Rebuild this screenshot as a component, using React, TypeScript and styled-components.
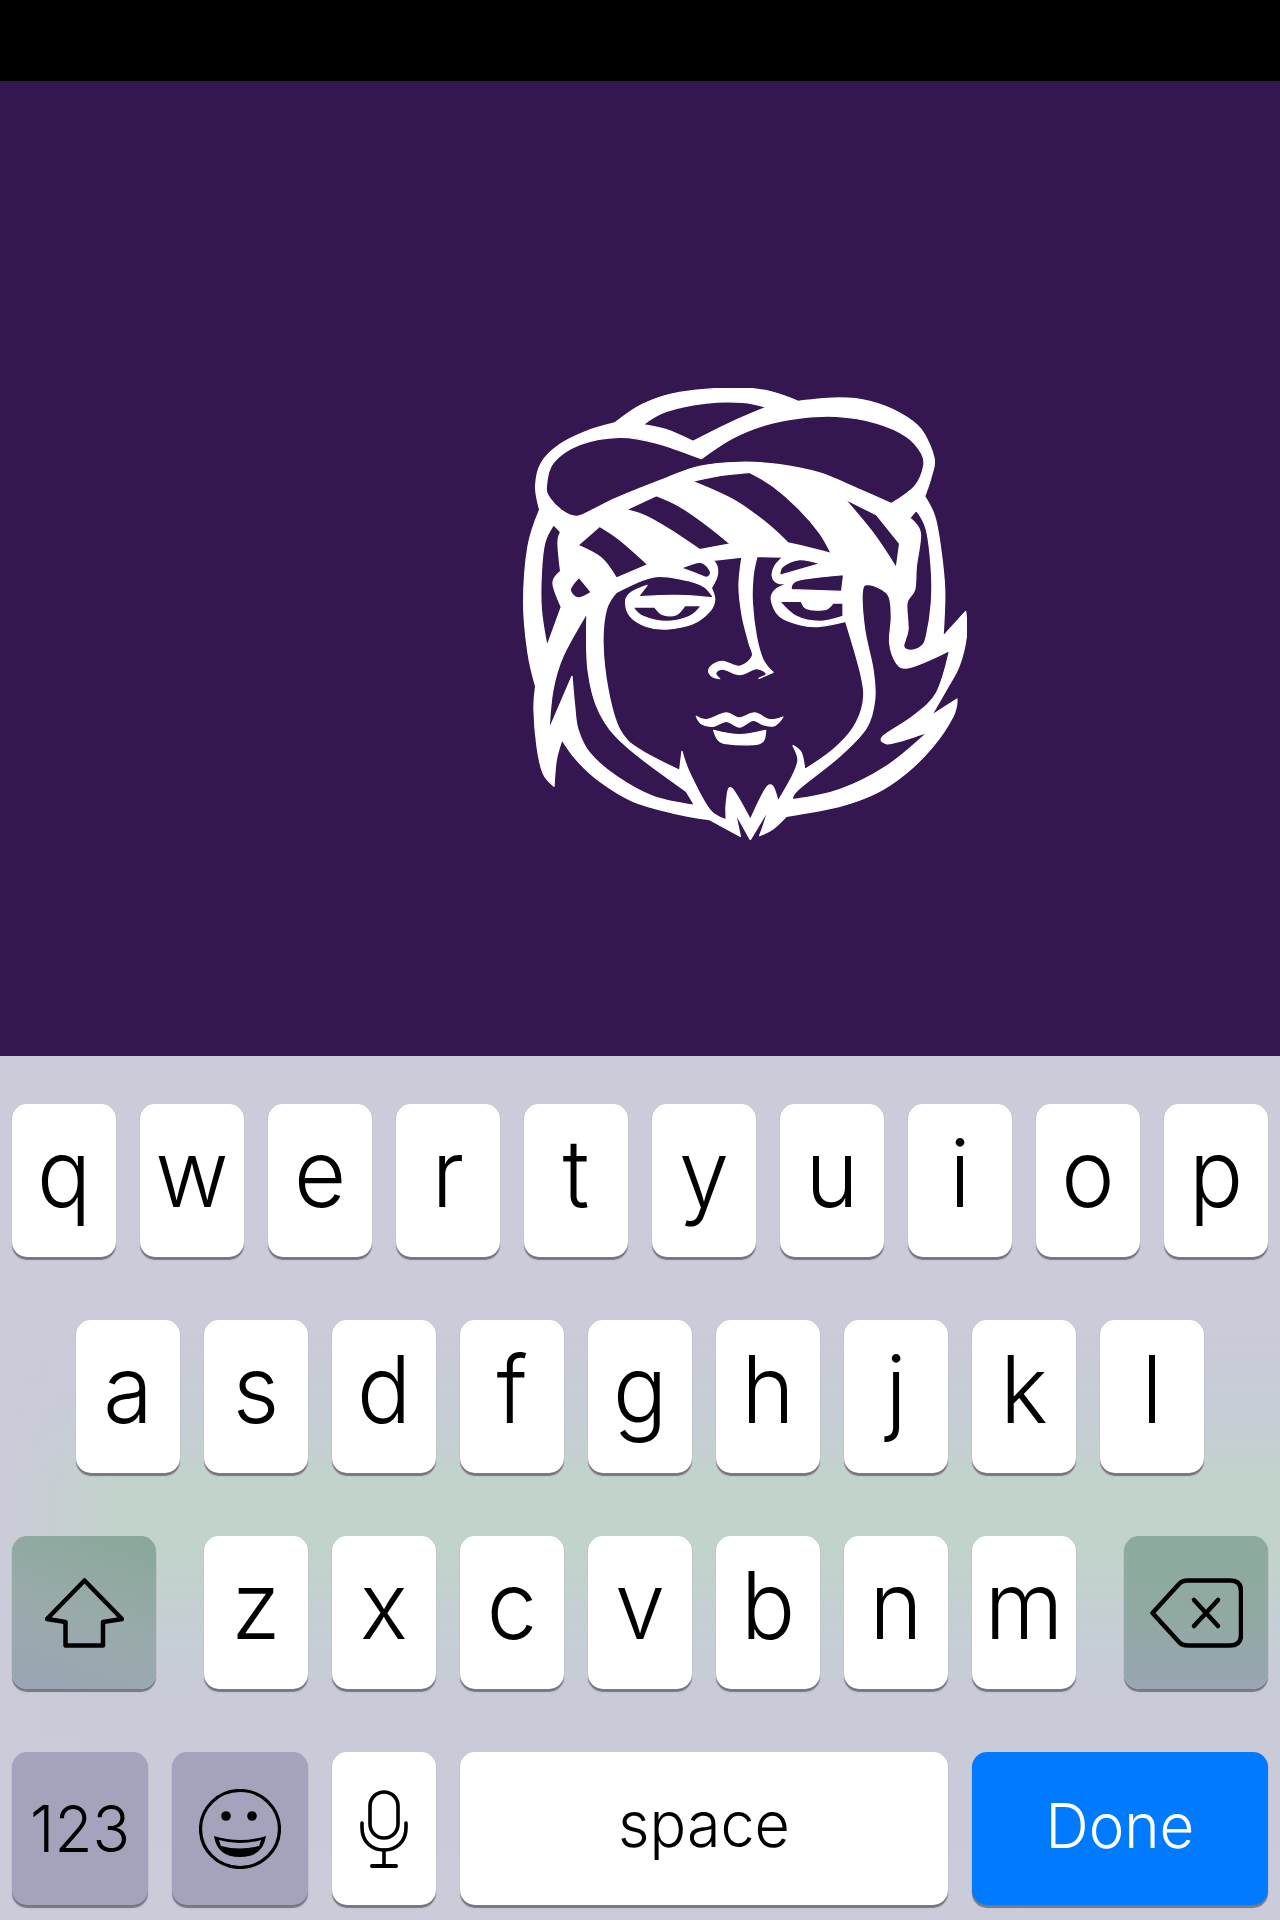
import React from "react";
import styled, { createGlobalStyle, css } from "styled-components";

const Global = createGlobalStyle`
  html, body { margin: 0; padding: 0; background: #000; }
  body { font-family: Inter, "Liberation Sans", sans-serif; }
`;

const Page = styled.div`
  width: 1280px;
  height: 1920px;
  display: flex;
  flex-direction: column;
  background: #000;
  overflow: hidden;
`;

const StatusBar = styled.div`
  height: 81px;
  flex: none;
  background: #000;
`;

const Hero = styled.div`
  height: 975px;
  flex: none;
  box-sizing: border-box;
  padding: 307px 0 0 523px;
  background: #341650;
`;

const Keyboard = styled.div`
  height: 864px;
  flex: none;
  box-sizing: border-box;
  padding: 48px 12px 0;
  display: flex;
  flex-direction: column;
  gap: 63px;
  background:
    linear-gradient(90deg, #cbcbd9 0, rgba(203, 203, 217, 0) 130px),
    linear-gradient(
      180deg,
      #cbcbd9 0,
      #cbcbd9 270px,
      #c6cdd6 360px,
      #c1d3ca 430px,
      #c1d3ca 490px,
      #c5ced5 580px,
      #c9cbd8 640px,
      #cbcbd9 100%
    );
`;

const Row = styled.div<{ $inset?: number }>`
  display: flex;
  justify-content: space-between;
  padding: 0 ${(p) => p.$inset ?? 0}px;
`;

const LetterGroup = styled.div`
  display: flex;
  gap: 24px;
`;

type Tone = "light" | "shift" | "delete" | "mod" | "done";

const toneStyles: Record<Tone, ReturnType<typeof css>> = {
  light: css`
    background: #fff;
    color: #000;
  `,
  shift: css`
    background: linear-gradient(200deg, #88a899 0%, #9aaaab 55%, #9aa5b6 100%);
    color: #000;
  `,
  delete: css`
    background: linear-gradient(180deg, #8cab9c 0%, #90a9a1 50%, #9aa5b4 100%);
    color: #000;
  `,
  mod: css`
    background: #a3a3bc;
    color: #000;
  `,
  done: css`
    background: #007aff;
    color: #fff;
  `,
};

const Key = styled.div<{ $w: number; $tone?: Tone }>`
  width: ${(p) => p.$w}px;
  height: 153px;
  flex: none;
  border-radius: 15px;
  display: flex;
  align-items: center;
  justify-content: center;
  box-shadow: 0 2.5px 1px rgba(70, 70, 80, 0.62);
  ${(p) => toneStyles[p.$tone ?? "light"]}
`;

const Glyph = styled.span<{ $size: number; $lift: number }>`
  display: block;
  font-family: Inter, "Liberation Sans", sans-serif;
  font-weight: 350;
  font-size: ${(p) => p.$size}px;
  line-height: 1;
  transform: translateY(${(p) => -p.$lift}px) scaleY(1.04);
`;

const HeadSvg = styled.svg`
  display: block;
  width: 444px;
  height: 452px;
`;

type P = [number, number] | [number, number, 1];

const smooth = (pts: P[]): string => {
  const n = pts.length;
  let d = `M${pts[0][0]} ${pts[0][1]}`;
  for (let i = 0; i < n; i++) {
    const p0 = pts[(i - 1 + n) % n];
    const p1 = pts[i];
    const p2 = pts[(i + 1) % n];
    const p3 = pts[(i + 2) % n];
    const c1 = p1[2] ? [p1[0], p1[1]] : [p1[0] + (p2[0] - p0[0]) / 6, p1[1] + (p2[1] - p0[1]) / 6];
    const c2 = p2[2] ? [p2[0], p2[1]] : [p2[0] - (p3[0] - p1[0]) / 6, p2[1] - (p3[1] - p1[1]) / 6];
    d += `C${c1[0].toFixed(1)} ${c1[1].toFixed(1)} ${c2[0].toFixed(1)} ${c2[1].toFixed(1)} ${p2[0]} ${p2[1]}`;
  }
  return d + "Z";
};

const outer: P[] = [
  [345, 160, 1], [430, 103], [540, 68], [720, 55], [820, 68], [895, 95, 1], [1020, 85], [1110, 95], [1200, 130],
  [1265, 180], [1303, 265], [1295, 320], [1275, 380, 1], [1305, 440], [1322, 530], [1335, 660], [1330, 800, 1],
  [1398, 725, 1], [1400, 800], [1378, 890], [1340, 960], [1295, 1038, 1], [1372, 988, 1], [1360, 1040], [1300, 1130],
  [1220, 1210], [1130, 1270], [1020, 1310], [860, 1340, 1], [820, 1378], [780, 1398, 1], [792, 1365], [806, 1320, 1],
  [752, 1410, 1], [707, 1330, 1], [722, 1400, 1], [630, 1350, 1], [520, 1330], [400, 1295], [300, 1235], [230, 1170],
  [187, 1110, 1], [170, 1170], [163, 1250, 1], [130, 1210], [112, 1130], [103, 1020], [108, 950, 1], [85, 850],
  [72, 700], [85, 530], [120, 420, 1], [108, 350], [125, 280], [180, 225], [260, 185],
];
const crown: P[] = [
  [430, 165, 1], [500, 125], [620, 100], [730, 98], [800, 113, 1], [690, 160], [580, 215, 1], [500, 180],
];
const cap: P[] = [
  [140, 350], [160, 280], [240, 225], [360, 203], [470, 220], [605, 267, 1], [700, 205], [800, 165], [900, 145],
  [1010, 140], [1130, 160], [1220, 200], [1265, 250], [1272, 290], [1245, 350], [1175, 402, 1], [1080, 360],
  [960, 310], [840, 285], [720, 278], [600, 290], [500, 325], [350, 385], [270, 425], [230, 440], [190, 425], [150, 385],
];
const stripeA: P[] = [
  [578, 335, 1], [660, 318], [750, 308, 1], [820, 350], [900, 420], [960, 490], [995, 552, 1], [930, 535],
  [865, 520, 1], [800, 460], [700, 390],
];
const stripeB: P[] = [
  [380, 420, 1], [470, 378, 1], [540, 410], [620, 465], [692, 523, 1], [600, 540, 1], [510, 480], [440, 440],
];
const stripeC: P[] = [
  [235, 527, 1], [300, 470, 1], [360, 510], [445, 585, 1], [350, 625, 1], [305, 565],
];
const rightGap: P[] = [
  [1035, 388, 1], [1130, 435, 1], [1200, 522, 1], [1190, 595, 1], [1120, 490],
];
const browLeft: P[] = [
  [545, 595, 1], [603, 578], [632, 605], [622, 623], [590, 612],
];
const browRight: P[] = [
  [840, 617, 1], [850, 590], [900, 570], [962, 582, 1],
];
const leftHair: P[] = [
  [125, 610], [135, 520], [162, 465, 1], [183, 487, 1], [175, 520], [183, 605, 1], [160, 640], [185, 712, 1],
  [142, 830, 1], [125, 720],
];
const diamond: P[] = [
  [238, 623, 1], [275, 668, 1], [235, 685], [212, 660],
];
const innerHair: P[] = [
  [262, 730, 1], [265, 900], [300, 1030], [380, 1130], [560, 1265, 1], [585, 1307, 1], [460, 1280], [350, 1220],
  [270, 1150], [235, 1080], [225, 1010], [217, 920, 1], [148, 1080, 1], [160, 960], [190, 860],
];
const rightBand: P[] = [
  [1250, 422, 1], [1280, 480], [1295, 600], [1295, 700], [1280, 800], [1265, 830], [1235, 842], [1212, 830],
  [1225, 780], [1222, 700], [1245, 660], [1250, 590], [1262, 490], [1230, 445, 1],
];
const rightLower: P[] = [
  [1088, 665], [1110, 645], [1165, 675], [1175, 740], [1170, 820], [1190, 880], [1220, 895], [1280, 875],
  [1350, 842, 1], [1310, 970], [1240, 1040], [1150, 1100], [1160, 1122], [1200, 1115], [1285, 1087, 1], [1160, 1190],
  [1020, 1260], [880, 1290, 1], [895, 1260], [1020, 1160], [1100, 1075], [1125, 990], [1120, 900], [1095, 780],
];
const face: P[] = [
  [350, 668, 1], [460, 622], [550, 630], [612, 650], [642, 685, 1], [560, 678], [480, 678], [415, 682, 1], [442, 647, 1],
  [395, 668], [378, 695], [392, 740], [440, 770], [500, 778], [580, 762], [630, 725], [645, 690], [635, 655, 1],
  [652, 620], [652, 590], [640, 572, 1], [727, 562, 1], [718, 650], [728, 740], [748, 820], [758, 860], [720, 890],
  [670, 875], [640, 885], [627, 905], [640, 922], [660, 927, 1], [648, 910], [670, 898], [720, 915], [770, 897],
  [800, 912], [778, 926, 1], [820, 908, 1], [790, 870], [770, 800], [758, 700], [760, 620], [772, 560, 1], [850, 562, 1],
  [825, 590], [818, 620], [835, 640], [875, 640, 1], [830, 658], [815, 690], [840, 740], [900, 765], [960, 770],
  [1038, 755, 1], [1085, 920], [1090, 1000], [1060, 1075], [1000, 1140], [915, 1200, 1], [905, 1150], [880, 1128, 1],
  [895, 1170], [880, 1215], [835, 1295, 1], [818, 1248], [795, 1262], [752, 1350, 1], [695, 1255], [680, 1300], [680, 1350, 1],
  [630, 1320], [570, 1210], [547, 1145, 1], [540, 1202, 1], [420, 1140], [360, 1080], [325, 960], [310, 820], [320, 720],
];
const lidLeft: P[] = [
  [400, 712, 1], [465, 712, 1], [490, 735], [530, 735], [555, 708, 1], [605, 708, 1], [570, 740], [500, 755], [430, 740],
];
const lidRight: P[] = [
  [840, 695, 1], [905, 695, 1], [922, 717], [975, 720], [1000, 700, 1], [1030, 700, 1], [1030, 740, 1], [960, 755], [890, 740],
];
const lidRightTop: P[] = [
  [875, 660, 1], [895, 632], [1032, 615, 1], [1026, 665, 1],
];
const mouthTop: P[] = [
  [590, 1040, 1], [620, 1050], [680, 1030], [718, 1045], [765, 1030], [810, 1050], [850, 1042, 1], [825, 1068],
  [790, 1065], [760, 1052], [720, 1072], [680, 1055], [640, 1070], [605, 1062],
];
const mouthBottom: P[] = [
  [642, 1082, 1], [720, 1095], [798, 1082, 1], [790, 1115], [760, 1125], [680, 1122], [655, 1110],
];

const headPath = [
  outer, crown, cap, stripeA, stripeB, stripeC, rightGap, browLeft, browRight, leftHair, diamond, innerHair,
  rightBand, rightLower, face, lidLeft, lidRight, lidRightTop, mouthTop, mouthBottom,
].map(smooth).join(" ");

const Head = () => (
  <HeadSvg viewBox="70 55 1332 1356" preserveAspectRatio="none">
    <path d={headPath} fill="#fff" fillRule="evenodd" stroke="#fff" strokeWidth="4" strokeLinejoin="round" />
  </HeadSvg>
);

const ShiftIcon = () => (
  <svg width="79" height="70" viewBox="0 0 79 70" fill="none" stroke="#000" strokeWidth="4.5" strokeLinejoin="round">
    <path d="M39.5 2.5 L77 41 L58 44 V67.5 H20.5 V44 L2 41 Z" />
  </svg>
);

const DeleteIcon = () => (
  <svg width="93" height="70" viewBox="0 0 93 70" fill="none" stroke="#000" strokeWidth="4.5" strokeLinecap="round" strokeLinejoin="round">
    <path d="M2.5 35 L29 6 Q32 2.5 38 2.5 H80 Q91 2.5 91 13 V57 Q91 67.5 80 67.5 H38 Q32 67.5 29 64 Z" />
    <path d="M44 22 L68 48 M68 22 L44 48" />
  </svg>
);

const EmojiIcon = () => (
  <svg width="82" height="80" viewBox="0 0 82 80" fill="none">
    <ellipse cx="41" cy="40" rx="39.5" ry="38.5" stroke="#000" strokeWidth="3.2" />
    <circle cx="27" cy="27" r="4.8" fill="#000" />
    <circle cx="53" cy="27" r="4.8" fill="#000" />
    <path d="M15 47 Q41 55 67 47 Q64 68 41 68 Q18 68 15 47 Z" fill="#000" />
    <path d="M20 51 Q41 57 62 51 Q61 55 60 57 Q41 62 22 57 Q21 55 20 51 Z" fill="#a3a3bc" />
  </svg>
);

const MicIcon = () => (
  <svg width="48" height="78" viewBox="0 0 48 78" fill="none" stroke="#000" strokeWidth="3.6" strokeLinecap="round">
    <rect x="10" y="2" width="28" height="46" rx="14" />
    <path d="M2 33 V38 C2 52 12 60 24 60 C36 60 46 52 46 38 V33" />
    <path d="M24 60 V75" />
    <path d="M12 76 H36" strokeWidth="4" />
  </svg>
);

const rows = ["qwertyuiop", "asdfghjkl", "zxcvbnm"];

const Letter = ({ c }: { c: string }) => (
  <Key $w={104}>
    <Glyph $size={90} $lift={7}>{c}</Glyph>
  </Key>
);

export default function App() {
  return (
    <Page>
      <Global />
      <StatusBar />
      <Hero>
        <Head />
      </Hero>
      <Keyboard>
        <Row>
          <LetterGroup>
            {rows[0].split("").map((c) => <Letter key={c} c={c} />)}
          </LetterGroup>
        </Row>
        <Row $inset={64}>
          <LetterGroup>
            {rows[1].split("").map((c) => <Letter key={c} c={c} />)}
          </LetterGroup>
        </Row>
        <Row>
          <Key $w={144} $tone="shift"><ShiftIcon /></Key>
          <LetterGroup>
            {rows[2].split("").map((c) => <Letter key={c} c={c} />)}
          </LetterGroup>
          <Key $w={144} $tone="delete"><DeleteIcon /></Key>
        </Row>
        <Row>
          <Key $w={136} $tone="mod"><Glyph $size={62} $lift={0}>123</Glyph></Key>
          <Key $w={136} $tone="mod"><EmojiIcon /></Key>
          <Key $w={104}><MicIcon /></Key>
          <Key $w={488}><Glyph $size={61} $lift={4}>space</Glyph></Key>
          <Key $w={296} $tone="done"><Glyph $size={60} $lift={4}>Done</Glyph></Key>
        </Row>
      </Keyboard>
    </Page>
  );
}
